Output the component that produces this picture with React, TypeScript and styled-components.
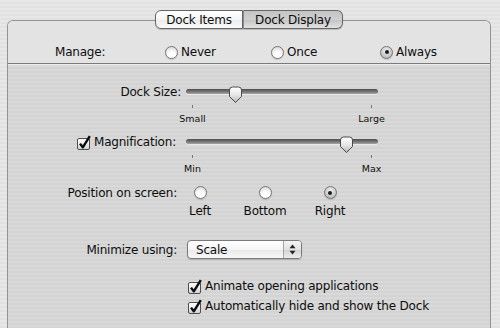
import React from 'react';
import styled, { createGlobalStyle } from 'styled-components';

const GlobalStyle = createGlobalStyle`
  html, body {
    margin: 0;
    padding: 0;
  }
  body {
    font-family: "DejaVu Sans", "Liberation Sans", sans-serif;
  }
`;

const Window = styled.div`
  width: 500px;
  height: 328px;
  box-sizing: border-box;
  padding-top: 10px;
  overflow: hidden;
  display: flex;
  flex-direction: column;
  background: repeating-linear-gradient(to bottom, #e7e7e7 0 2px, #e1e1e1 2px 4px);
  font-family: "DejaVu Sans", "Liberation Sans", sans-serif;
  font-size: 12px;
  letter-spacing: -0.2px;
  color: #0e0e0e;
`;

const TabStrip = styled.div`
  display: flex;
  justify-content: center;
  margin: 0 9px 0 7px;
  position: relative;
  z-index: 1;
`;

const Tab = styled.div<{ $selected?: boolean; $side: 'left' | 'right'; $width: number }>`
  width: ${(p) => p.$width}px;
  height: 19px;
  box-sizing: border-box;
  border: 1px solid #666;
  border-left: ${(p) => (p.$side === 'right' ? '1px solid #8a8a8a' : '1px solid #666')};
  border-radius: ${(p) => (p.$side === 'left' ? '6px 0 0 6px' : '0 6px 6px 0')};
  text-align: center;
  line-height: 18px;
  box-shadow: 0 1px 1px rgba(0, 0, 0, 0.18);
  background: ${(p) =>
    p.$selected
      ? 'linear-gradient(#c4c4c4, #cfcfcf 50%, #c2c2c2 51%, #e2e2e2)'
      : 'linear-gradient(#ffffff, #f6f6f6 50%, #ebebeb 51%, #fafafa)'};
`;

const Panel = styled.div`
  flex: 1;
  margin: -9px 9px 0 7px;
  border: 1px solid #939393;
  border-bottom: none;
  border-radius: 6px 6px 0 0;
  display: flex;
  flex-direction: column;
  background: repeating-linear-gradient(to bottom, #d9d9d9 0 2px, #d3d3d3 2px 4px);
`;

const ManageBar = styled.div`
  height: 43px;
  box-sizing: border-box;
  padding-top: 20px;
  display: flex;
  align-items: center;
  border-radius: 5px 5px 0 0;
  border-bottom: 1px solid #7a7a7a;
  box-shadow: 0 1px 0 #ececec;
  background: #e3e3e3;
`;

const ManageLabel = styled.div`
  margin-left: 47px;
  width: 110px;
`;

const Choice = styled.label<{ $width?: number }>`
  display: flex;
  align-items: center;
  gap: 3px;
  width: ${(p) => (p.$width ? `${p.$width}px` : 'auto')};
`;

const RadioDot = styled.span<{ $on?: boolean }>`
  width: 13px;
  height: 13px;
  box-sizing: border-box;
  flex-shrink: 0;
  border-radius: 50%;
  border: 1px solid #767676;
  display: flex;
  align-items: center;
  justify-content: center;
  box-shadow: 0 1px 1px rgba(0, 0, 0, 0.15);
  background: ${(p) =>
    p.$on
      ? 'radial-gradient(circle at 50% 35%, #f2f2f2, #c4c4c4 65%, #a2a2a2)'
      : 'radial-gradient(circle at 50% 80%, #ffffff 0 35%, #e6e6e6 70%, #cdcdcd)'};
  &::after {
    content: '';
    display: ${(p) => (p.$on ? 'block' : 'none')};
    width: 4px;
    height: 4px;
    border-radius: 50%;
    background: #1c1c1c;
  }
`;

const Body = styled.div`
  padding-top: 22px;
  display: flex;
  flex-direction: column;
`;

const Row = styled.div<{ $gap?: number; $center?: boolean }>`
  display: flex;
  align-items: ${(p) => (p.$center ? 'center' : 'flex-start')};
  margin-top: ${(p) => p.$gap ?? 0}px;
`;

const FieldLabel = styled.div<{ $pad?: number; $offset?: number }>`
  width: 178px;
  box-sizing: border-box;
  flex-shrink: 0;
  padding-right: ${(p) => p.$pad ?? 9}px;
  margin-top: ${(p) => p.$offset ?? 0}px;
  display: flex;
  justify-content: flex-end;
  align-items: center;
  gap: 2px;
  line-height: 16px;
  white-space: nowrap;
`;

const Slider = styled.div`
  width: 192px;
  display: flex;
  flex-direction: column;
`;

const SliderBody = styled.div`
  position: relative;
  height: 18px;
  &::before {
    content: '';
    position: absolute;
    left: 0;
    right: 0;
    top: 3px;
    height: 5px;
    border-radius: 3px;
    background: linear-gradient(#4f4f4f, #777 55%, #a5a5a5);
    box-shadow: 0 1px 0 rgba(255, 255, 255, 0.5);
  }
`;

const Thumb = styled.svg`
  position: absolute;
  top: 0;
`;

const TickRow = styled.div`
  display: flex;
  justify-content: space-between;
  padding: 0 6px;
  margin-top: 1px;
`;

const Tick = styled.div`
  width: 1px;
  display: flex;
  flex-direction: column;
  align-items: center;
`;

const TickLine = styled.span`
  width: 1px;
  height: 3px;
  flex-shrink: 0;
  background: #777;
`;

const TickText = styled.span`
  margin-top: 5px;
  font-size: 9.5px;
  line-height: 11px;
  letter-spacing: 0;
  white-space: nowrap;
`;

const RadioColumns = styled.div`
  display: flex;
  gap: 37px;
`;

const RadioColumn = styled.label`
  width: 28px;
  display: flex;
  flex-direction: column;
  align-items: center;
`;

const ColumnText = styled.span`
  margin-top: 5px;
  line-height: 14px;
  white-space: nowrap;
`;

const Popup = styled.div`
  width: 115px;
  height: 19px;
  margin-left: 1px;
  box-sizing: border-box;
  display: flex;
  border: 1px solid #7a7a7a;
  border-radius: 4px;
  box-shadow: 0 1px 1px rgba(0, 0, 0, 0.18);
  background: linear-gradient(#ffffff, #f5f5f5 50%, #e9e9e9 51%, #f8f8f8);
`;

const PopupValue = styled.span`
  flex: 1;
  padding-left: 8px;
  line-height: 18px;
`;

const PopupArrows = styled.span`
  width: 17px;
  border-left: 1px solid #a5a5a5;
  border-radius: 0 3px 3px 0;
  display: flex;
  align-items: center;
  justify-content: center;
  background: linear-gradient(#f4f4f4, #e2e2e2 50%, #d2d2d2 51%, #ececec);
`;

const CheckRow = styled.label<{ $gap: number }>`
  display: flex;
  align-items: center;
  gap: 2px;
  margin: ${(p) => p.$gap}px 0 0 180px;
  line-height: 16px;
`;

const Radio = ({ on }: { on?: boolean }) => <RadioDot $on={on} />;

const Check = () => (
  <svg width="15" height="15" viewBox="0 0 15 15">
    <defs>
      <linearGradient id="cb" x1="0" y1="0" x2="0" y2="1">
        <stop offset="0" stopColor="#ffffff" />
        <stop offset="0.5" stopColor="#eeeeee" />
        <stop offset="1" stopColor="#cfcfcf" />
      </linearGradient>
    </defs>
    <rect x="0.5" y="3.5" width="12" height="11" rx="1.5" fill="url(#cb)" stroke="#4d4d4d" />
    <path d="M3 8.6 L5.8 12.3 L12.8 1.2" fill="none" stroke="#0c0c0c" strokeWidth="2.4" strokeLinejoin="round" />
  </svg>
);

type SliderProps = { value: number; min: string; max: string };

const RangeSlider = ({ value, min, max }: SliderProps) => (
  <Slider>
    <SliderBody>
      <Thumb width="15" height="18" viewBox="0 0 15 18" style={{ left: 7 + value * 178 - 7.5 }}>
        <defs>
          <linearGradient id="th" x1="0" y1="0" x2="0" y2="1">
            <stop offset="0" stopColor="#ffffff" />
            <stop offset="0.55" stopColor="#e4e4e4" />
            <stop offset="1" stopColor="#b5b5b5" />
          </linearGradient>
        </defs>
        <path
          d="M1.5 4 Q1.5 1 4.5 1 H10.5 Q13.5 1 13.5 4 V10.5 L7.5 16.5 L1.5 10.5 Z"
          fill="url(#th)"
          stroke="#4a4a4a"
        />
      </Thumb>
    </SliderBody>
    <TickRow>
      <Tick>
        <TickLine />
        <TickText>{min}</TickText>
      </Tick>
      <Tick>
        <TickLine />
        <TickText>{max}</TickText>
      </Tick>
    </TickRow>
  </Slider>
);

const positions = [
  { name: 'Left', on: false },
  { name: 'Bottom', on: false },
  { name: 'Right', on: true },
];

const App: React.FC = () => {
  return (
    <Window>
      <GlobalStyle />
      <TabStrip>
        <Tab $side="left" $width={88}>
          Dock Items
        </Tab>
        <Tab $side="right" $width={100} $selected>
          Dock Display
        </Tab>
      </TabStrip>
      <Panel>
        <ManageBar>
          <ManageLabel>Manage:</ManageLabel>
          <Choice $width={106}>
            <Radio />
            Never
          </Choice>
          <Choice $width={109}>
            <Radio />
            Once
          </Choice>
          <Choice>
            <Radio on />
            Always
          </Choice>
        </ManageBar>
        <Body>
          <Row>
            <FieldLabel $pad={5} $offset={-2}>
              Dock Size:
            </FieldLabel>
            <RangeSlider value={0.24} min="Small" max="Large" />
          </Row>
          <Row $gap={12}>
            <FieldLabel $pad={10} $offset={-2}>
              <Check />
              Magnification:
            </FieldLabel>
            <RangeSlider value={0.86} min="Min" max="Max" />
          </Row>
          <Row $gap={12}>
            <FieldLabel $offset={-1}>Position on screen:</FieldLabel>
            <RadioColumns>
              {positions.map((p) => (
                <RadioColumn key={p.name}>
                  <Radio on={p.on} />
                  <ColumnText>{p.name}</ColumnText>
                </RadioColumn>
              ))}
            </RadioColumns>
          </Row>
          <Row $gap={22} $center>
            <FieldLabel>Minimize using:</FieldLabel>
            <Popup>
              <PopupValue>Scale</PopupValue>
              <PopupArrows>
                <svg width="7" height="11" viewBox="0 0 7 11">
                  <path d="M3.5 0.5 L6.5 4.2 H0.5 Z" fill="#222" />
                  <path d="M3.5 10.5 L6.5 6.8 H0.5 Z" fill="#222" />
                </svg>
              </PopupArrows>
            </Popup>
          </Row>
          <CheckRow $gap={19}>
            <Check />
            Animate opening applications
          </CheckRow>
          <CheckRow $gap={4}>
            <Check />
            Automatically hide and show the Dock
          </CheckRow>
        </Body>
      </Panel>
    </Window>
  );
};

export default App;
